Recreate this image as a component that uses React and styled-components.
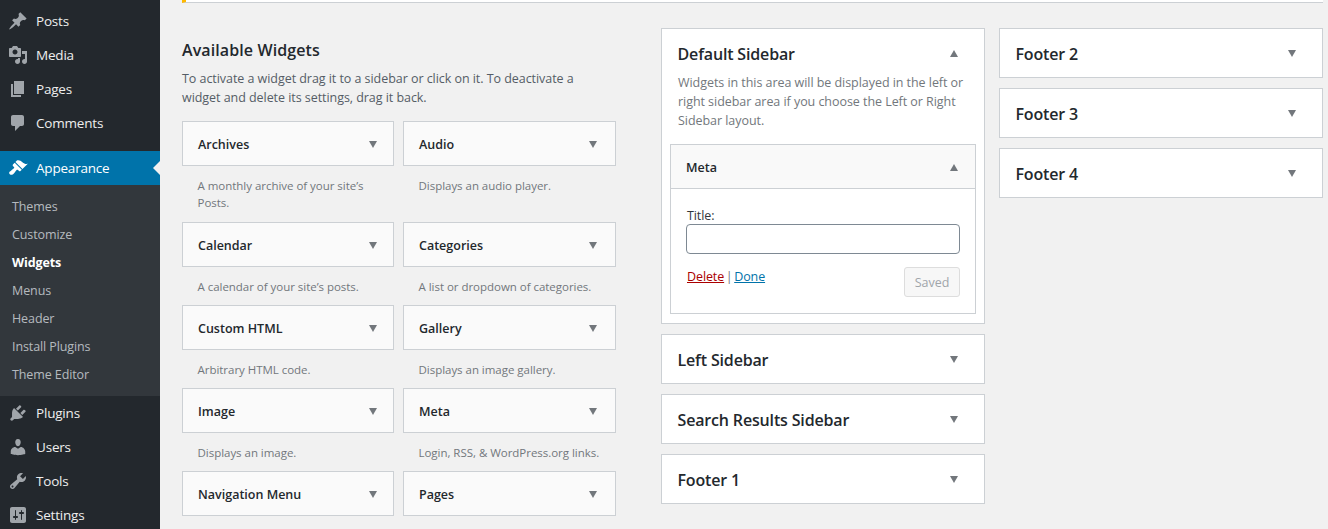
import React from 'react'
import styled, { createGlobalStyle } from 'styled-components'

const icons = {
  post: 'M10.44 3.02l1.82-1.82 6.36 6.35-1.83 1.82c-1.05-.68-2.48-.57-3.41.36l-.75.75c-.92.93-1.04 2.35-.35 3.41l-1.83 1.82-2.41-2.41-2.8 2.79c-.42.42-3.38 2.71-3.8 2.29s1.86-3.39 2.28-3.81l2.79-2.79L4.1 9.36l1.83-1.82c1.05.69 2.48.57 3.4-.36l.75-.75c.93-.92 1.05-2.35.36-3.41z',
  media: 'M13 11V4c0-.55-.45-1-1-1h-1.67L9 1H5L3.67 3H2c-.55 0-1 .45-1 1v7c0 .55.45 1 1 1h10c.55 0 1-.45 1-1zM7 4.5c1.38 0 2.5 1.12 2.5 2.5S8.38 9.5 7 9.5 4.5 8.38 4.5 7 5.62 4.5 7 4.5zM14 6h5v10.5c0 1.38-1.12 2.5-2.5 2.5S14 17.88 14 16.5s1.12-2.5 2.5-2.5c.17 0 .34.02.5.05V9h-3V6zm-4 8.05V13h2v3.5c0 1.38-1.12 2.5-2.5 2.5S7 17.88 7 16.5 8.12 14 9.5 14c.17 0 .34.02.5.05z',
  page: 'M6 15V2h10v13H6zm-1 1h8v2H3V5h2v11z',
  comments: 'M5 2h9c1.1 0 2 .9 2 2v7c0 1.1-.9 2-2 2h-2l-5 5v-5H5c-1.1 0-2-.9-2-2V4c0-1.1.9-2 2-2z',
  appearance: 'M14.48 11.06L7.41 3.99l1.5-1.5c.5-.56 2.3-.47 3.51.32 1.21.8 1.43 1.28 2.91 2.1 1.18.64 2.45 1.26 4.45.85zm-.71.71L6.7 4.7 4.93 6.47c-.39.39-.39 1.02 0 1.41l1.06 1.06c.39.39.39 1.03 0 1.42-.6.6-1.43 1.11-2.21 1.69-.35.26-.7.53-1.01.84C1.43 13.23.4 14.75 1.8 16.15c1.4 1.4 2.92.37 4.26-.97.31-.31.58-.66.84-1.01.58-.78 1.09-1.61 1.69-2.21.39-.39 1.03-.39 1.42 0l1.06 1.06c.39.39 1.02.39 1.41 0z',
  plugins: 'M13.11 4.36L9.87 7.6 8 5.73l3.24-3.24c.35-.34 1.05-.2 1.56.32.52.51.66 1.21.31 1.55zm-8 1.77l.91-1.12 9.01 9.01-1.19.84c-.71.71-2.63 1.16-3.82 1.16H6.14L4.9 17.26c-.59.59-1.54.59-2.12 0-.59-.58-.59-1.53 0-2.12l1.24-1.24v-3.88c0-1.13.4-3.19 1.09-3.89zm7.26 3.97l3.24-3.24c.34-.35 1.04-.21 1.55.31.52.51.66 1.21.31 1.55l-3.24 3.25z',
  users: 'M10 9.25c-2.27 0-2.73-3.44-2.73-3.44C7 4.02 7.82 2 9.97 2c2.16 0 2.98 2.02 2.71 3.81 0 0-.41 3.44-2.68 3.44zm0 2.57L12.72 10c2.39 0 4.52 2.33 4.52 4.53v2.49s-3.65 1.13-7.24 1.13c-3.65 0-7.24-1.13-7.24-1.13v-2.49c0-2.25 1.94-4.48 4.47-4.48z',
  tools: 'M16.68 9.77c-1.34 1.34-3.3 1.67-4.95.99l-5.41 6.52c-.99.99-2.59.99-3.58 0s-.99-2.59 0-3.57l6.52-5.42c-.68-1.65-.35-3.61.99-4.95 1.28-1.28 3.12-1.62 4.72-1.06l-2.89 2.89 2.82 2.82 2.86-2.87c.53 1.58.18 3.39-1.08 4.65zM3.81 16.21c.4.39 1.04.39 1.43 0 .4-.4.4-1.04 0-1.43-.39-.4-1.03-.4-1.43 0-.39.39-.39 1.03 0 1.43z',
  settings: 'M18 16V4c0-1.1-.9-2-2-2H4c-1.1 0-2 .9-2 2v12c0 1.1.9 2 2 2h12c1.1 0 2-.9 2-2zM8 11h1c.55 0 1 .45 1 1s-.45 1-1 1H8v1.5c0 .28-.22.5-.5.5s-.5-.22-.5-.5V13H6c-.55 0-1-.45-1-1s.45-1 1-1h1V5.5c0-.28.22-.5.5-.5s.5.22.5.5V11zm5-2h-1c-.55 0-1-.45-1-1s.45-1 1-1h1V5.5c0-.28.22-.5.5-.5s.5.22.5.5V7h1c.55 0 1 .45 1 1s-.45 1-1 1h-1v5.5c0 .28-.22.5-.5.5s-.5-.22-.5-.5V9z',
}

const GlobalStyle = createGlobalStyle`
  html, body {
    margin: 0;
    height: 100%;
    overflow: hidden;
    background: #f1f1f1;
    font-family: "Open Sans", "Noto Sans", sans-serif;
    font-size: 13px;
    color: #23282d;
  }
`

const Page = styled.div`
  display: flex;
  height: 529px;
  overflow: hidden;
`

const Nav = styled.nav`
  width: 160px;
  flex-shrink: 0;
  background: #23282d;
  padding-top: 4px;
`

const NavItem = styled.div`
  position: relative;
  display: flex;
  align-items: center;
  height: 34px;
  padding-left: 8px;
  gap: 8px;
  font-size: 13.5px;
  letter-spacing: -0.2px;
  color: ${p => (p.$current ? '#fff' : '#eee')};
  background: ${p => (p.$current ? '#0073aa' : 'transparent')};
  margin-top: ${p => (p.$current ? '11px' : '0')};

  svg {
    width: 20px;
    height: 20px;
    fill: ${p => (p.$current ? '#fff' : '#a0a5aa')};
  }

  ${p => p.$current && `
    &::after {
      content: '';
      position: absolute;
      right: 0;
      top: 10px;
      border: 7px solid transparent;
      border-left-width: 0;
      border-right-color: #f1f1f1;
    }
  `}
`

const SubMenu = styled.div`
  background: #32373c;
  padding: 8px 0 7px;
`

const SubItem = styled.div`
  height: 28px;
  line-height: 28px;
  padding-left: 12px;
  font-size: 12.5px;
  letter-spacing: -0.1px;
  color: ${p => (p.$current ? '#fff' : 'rgba(240, 245, 250, 0.7)')};
  font-weight: ${p => (p.$current ? 700 : 400)};
`

const Main = styled.main`
  flex: 1;
  padding: 0 5px 0 22px;
  min-width: 0;
`

const Notice = styled.div`
  height: 2px;
  background: #fff;
  border-left: 4px solid #ffb900;
  border-bottom: 1px solid #ccd0d4;
`

const Columns = styled.div`
  display: flex;
  margin-top: 25px;
`

const Available = styled.section`
  width: 434px;
  margin-right: 45px;
  padding-top: 12px;
`

const Heading = styled.h2`
  margin: 0;
  font-size: 16px;
  line-height: 20px;
  font-weight: 600;
  letter-spacing: 0.1px;
  color: #23282d;
`

const Intro = styled.p`
  max-width: 400px;
  margin: 9px 0 14px;
  font-size: 12.5px;
  line-height: 19px;
  letter-spacing: -0.05px;
  color: #555d66;
`

const WidgetTop = styled.div`
  display: flex;
  align-items: center;
  justify-content: space-between;
  box-sizing: border-box;
  height: 45px;
  padding: 1px 16.5px 0 15px;
  background: #fafafa;
  border: 1px solid #ccd0d4;
  font-size: 12.5px;
  font-weight: 600;
  color: #23282d;
`

const WidgetDesc = styled.p`
  margin: 0;
  padding: 11px 15.5px 0;
  font-size: 11.5px;
  line-height: 17px;
  letter-spacing: -0.03px;
  color: #72777c;
`

const WidgetGrid = styled.div`
  display: grid;
  grid-template-columns: 212px 213px;
  grid-template-rows: 101px repeat(4, 83px);
  column-gap: 9px;

  > div:nth-child(even) ${WidgetTop} {
    padding-right: 18px;
  }
`

const Caret = styled.span`
  width: 0;
  height: 0;
  flex-shrink: 0;
  border-left: 4.5px solid transparent;
  border-right: 4.5px solid transparent;
  ${p => (p.$up ? 'border-bottom: 7px solid #72777c;' : 'border-top: 7px solid #72777c;')}
`

const SidebarColumn = styled.div`
  display: flex;
  flex-direction: column;
  gap: 10px;
  width: 324px;
  margin-right: 14px;

  &:last-child {
    margin-right: 0;
  }
`

const SidebarBox = styled.div`
  background: #fff;
  border: 1px solid #ccd0d4;
  padding-bottom: ${p => (p.$open ? '9px' : '0')};
`

const SidebarHeader = styled.div`
  display: flex;
  justify-content: space-between;
  align-items: flex-start;
  box-sizing: border-box;
  height: ${p => (p.$open ? '44px' : '48px')};
  padding: 15px 26px 0 15.5px;
  font-size: 16px;
  line-height: 20px;
  font-weight: 600;
  letter-spacing: -0.16px;

  ${Caret} {
    margin-top: 6px;
  }
`

const SidebarDesc = styled.p`
  margin: 0 0 14px;
  padding: 0 16px;
  font-size: 12.5px;
  line-height: 19px;
  letter-spacing: -0.05px;
  color: #72777c;
`

const OpenWidget = styled.div`
  margin: 0 8px;
  border: 1px solid #ccd0d4;
`

const OpenWidgetHead = styled(WidgetTop)`
  height: 44px;
  border: 0;
  border-bottom: 1px solid #ccd0d4;
  padding-right: 17px;
  background: #f9f9f9;
`

const OpenWidgetBody = styled.div`
  padding: 17px 15px 16px;
`

const FieldLabel = styled.label`
  display: block;
  padding: 1px 0 0 1px;
  height: 17px;
  font-size: 12.5px;
  line-height: 18px;
  letter-spacing: -0.1px;
  color: #32373c;
`

const TextInput = styled.input`
  display: block;
  box-sizing: border-box;
  width: 100%;
  height: 30px;
  padding: 0 8px;
  background: #fff;
  border: 1px solid #7e8993;
  border-radius: 4px;
`

const Actions = styled.div`
  display: flex;
  justify-content: space-between;
  align-items: flex-start;
  margin-top: 13px;
  font-size: 12.5px;
  line-height: 18px;
  letter-spacing: -0.1px;
  color: #72777c;
`

const ActionText = styled.span`
  padding: 1px 0 0 1px;
  word-spacing: -1.5px;
`

const ActionLink = styled.a`
  color: ${p => (p.$danger ? '#a00' : '#0073aa')};
  text-decoration: underline;
`

const SavedButton = styled.button`
  box-sizing: border-box;
  width: 56px;
  height: 30px;
  padding: 1px 0 0;
  background: #f7f7f7;
  border: 1px solid #ddd;
  border-radius: 3px;
  font: inherit;
  color: #a0a5aa;
`

const DashIcon = ({ name }) => (
  <svg viewBox="0 0 20 20" aria-hidden="true"><path d={icons[name]} /></svg>
)

const topItems = [['post', 'Posts'], ['media', 'Media'], ['page', 'Pages'], ['comments', 'Comments']]
const subItems = ['Themes', 'Customize', 'Widgets', 'Menus', 'Header', 'Install Plugins', 'Theme Editor']
const bottomItems = [['plugins', 'Plugins'], ['users', 'Users'], ['tools', 'Tools'], ['settings', 'Settings']]

const widgets = [
  ['Archives', 'A monthly archive of your site’s Posts.'],
  ['Audio', 'Displays an audio player.'],
  ['Calendar', 'A calendar of your site’s posts.'],
  ['Categories', 'A list or dropdown of categories.'],
  ['Custom HTML', 'Arbitrary HTML code.'],
  ['Gallery', 'Displays an image gallery.'],
  ['Image', 'Displays an image.'],
  ['Meta', 'Login, RSS, & WordPress.org links.'],
  ['Navigation Menu', ''],
  ['Pages', ''],
]

const ClosedSidebar = ({ title }) => (
  <SidebarBox>
    <SidebarHeader>{title}<Caret /></SidebarHeader>
  </SidebarBox>
)

const App = () => {
  return (
    <Page>
      <GlobalStyle />
      <Nav>
        {topItems.map(([icon, label]) => (
          <NavItem key={label}><DashIcon name={icon} />{label}</NavItem>
        ))}
        <NavItem $current><DashIcon name="appearance" />Appearance</NavItem>
        <SubMenu>
          {subItems.map(label => (
            <SubItem key={label} $current={label === 'Widgets'}>{label}</SubItem>
          ))}
        </SubMenu>
        {bottomItems.map(([icon, label]) => (
          <NavItem key={label}><DashIcon name={icon} />{label}</NavItem>
        ))}
      </Nav>

      <Main>
        <Notice />
        <Columns>
          <Available>
            <Heading>Available Widgets</Heading>
            <Intro>To activate a widget drag it to a sidebar or click on it. To deactivate a widget and delete its settings, drag it back.</Intro>
            <WidgetGrid>
              {widgets.map(([title, desc]) => (
                <div key={title}>
                  <WidgetTop>{title}<Caret /></WidgetTop>
                  <WidgetDesc>{desc}</WidgetDesc>
                </div>
              ))}
            </WidgetGrid>
          </Available>

          <SidebarColumn>
            <SidebarBox $open>
              <SidebarHeader $open>Default Sidebar<Caret $up /></SidebarHeader>
              <SidebarDesc>Widgets in this area will be displayed in the left or right sidebar area if you choose the Left or Right Sidebar layout.</SidebarDesc>
              <OpenWidget>
                <OpenWidgetHead>Meta<Caret $up /></OpenWidgetHead>
                <OpenWidgetBody>
                  <FieldLabel>Title:</FieldLabel>
                  <TextInput type="text" />
                  <Actions>
                    <ActionText>
                      <ActionLink $danger>Delete</ActionLink> | <ActionLink>Done</ActionLink>
                    </ActionText>
                    <SavedButton disabled>Saved</SavedButton>
                  </Actions>
                </OpenWidgetBody>
              </OpenWidget>
            </SidebarBox>
            <ClosedSidebar title="Left Sidebar" />
            <ClosedSidebar title="Search Results Sidebar" />
            <ClosedSidebar title="Footer 1" />
          </SidebarColumn>

          <SidebarColumn>
            <ClosedSidebar title="Footer 2" />
            <ClosedSidebar title="Footer 3" />
            <ClosedSidebar title="Footer 4" />
          </SidebarColumn>
        </Columns>
      </Main>
    </Page>
  )
}

export default App
